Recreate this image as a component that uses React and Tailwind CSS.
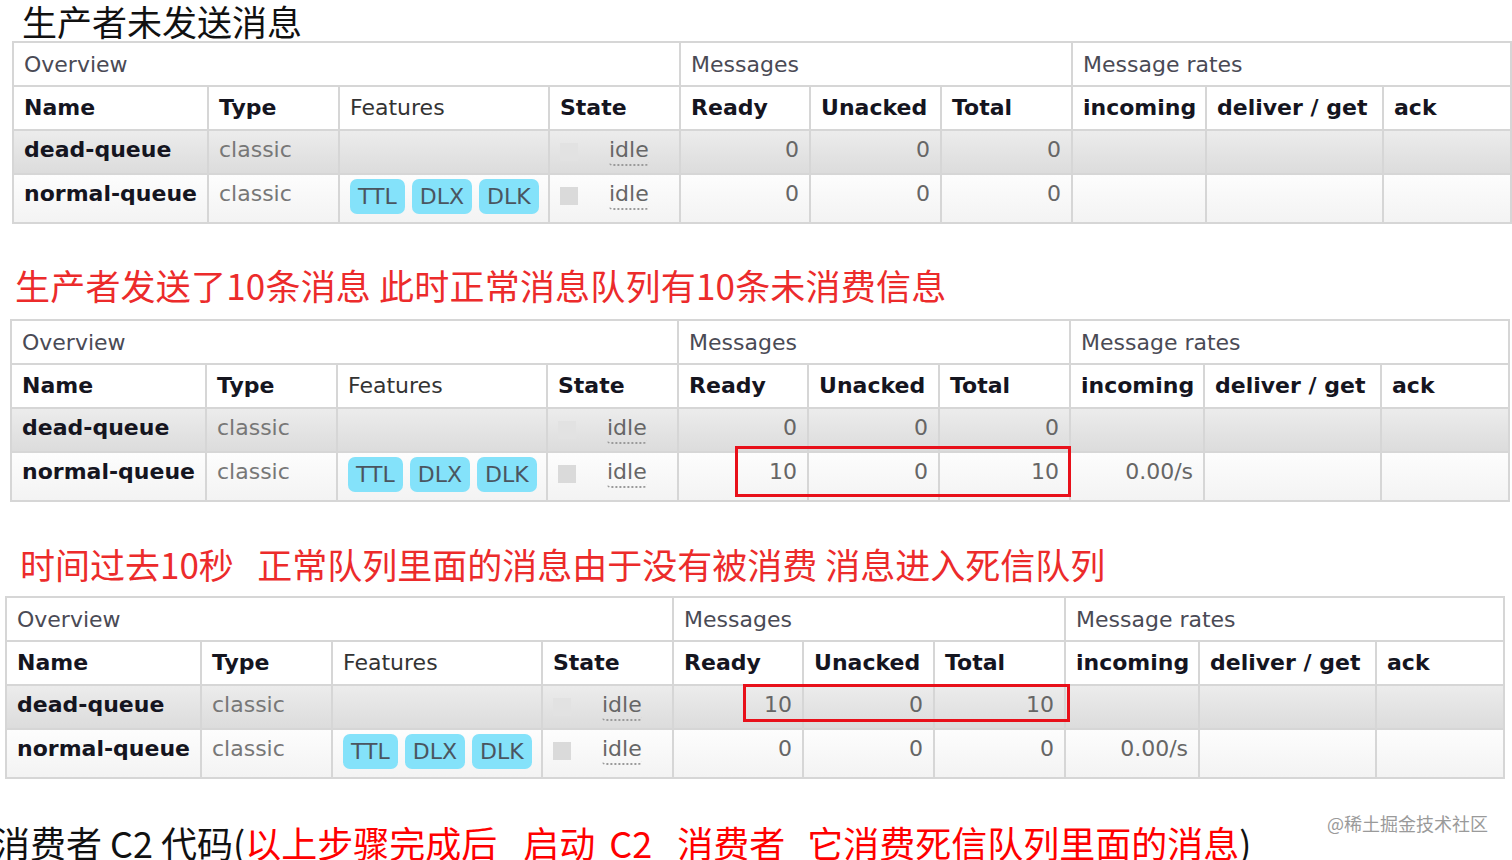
import React from 'react';

const cellBase = 'border-2 border-[#d6d6d6] px-[10px] overflow-hidden whitespace-nowrap';
const headBold = 'text-[22px] font-bold text-[#15151f]';

const Badge = ({ children }) => (
  <span className="inline-flex h-[35px] items-center rounded-[7px] bg-[#84e2fa] px-[8px] text-[22px] leading-[26px] text-[#4a5560]">
    {children}
  </span>
);

const Idle = ({ dead }) => (
  <div className="flex items-start">
    <span className={`mt-[6px] h-[18px] w-[18px] ${dead ? 'bg-[#e2e2e2]' : 'bg-[#dadada]'}`} />
    <span className="ml-[31px] rounded-b-[4px] border-b-2 border-dotted border-[#9a9a9a] pb-[1px] leading-[26px] text-[#666]">
      idle
    </span>
  </div>
);

const QueueTable = ({ rows, offset, box }) => (
  <div className={`relative h-[181px] ${offset}`}>
    <table className="w-[1498px] table-fixed border-collapse font-['DejaVu_Sans',Verdana,sans-serif]">
      <colgroup>
        <col className="w-[195px]" />
        <col className="w-[131px]" />
        <col className="w-[210px]" />
        <col className="w-[131px]" />
        <col className="w-[130px]" />
        <col className="w-[131px]" />
        <col className="w-[131px]" />
        <col className="w-[134px]" />
        <col className="w-[177px]" />
        <col className="w-[128px]" />
      </colgroup>
      <tbody>
        {/* group header */}
        <tr className="h-[44px] bg-white text-[22px] text-[#4a4a55]">
          <td colSpan={4} className={cellBase}>Overview</td>
          <td colSpan={3} className={cellBase}>Messages</td>
          <td colSpan={3} className={cellBase}>Message rates</td>
        </tr>
        <tr className="h-[44px] bg-white leading-[26px]">
          <td className={`${cellBase} ${headBold}`}>Name</td>
          <td className={`${cellBase} ${headBold}`}>Type</td>
          <td className={`${cellBase} text-[22px] text-[#333]`}>Features</td>
          <td className={`${cellBase} ${headBold}`}>State</td>
          <td className={`${cellBase} ${headBold}`}>Ready</td>
          <td className={`${cellBase} ${headBold}`}>Unacked</td>
          <td className={`${cellBase} ${headBold}`}>Total</td>
          <td className={`${cellBase} ${headBold}`}>incoming</td>
          <td className={`${cellBase} ${headBold}`}>deliver / get</td>
          <td className={`${cellBase} ${headBold}`}>ack</td>
        </tr>
        {rows.map((r) => {
          const bg = r.dead
            ? 'bg-gradient-to-b from-[#ececec] to-[#dcdcdc]'
            : 'bg-gradient-to-b from-[#fdfdfd] to-[#f3f3f3]';
          const td = `${cellBase} ${bg} align-top pt-[6px] leading-[26px]`;
          return (
            <tr key={r.name} className={r.dead ? 'h-[44px]' : 'h-[49px]'}>
              <td className={`${td} ${headBold}`}>{r.name}</td>
              <td className={`${td} text-[22px] text-[#777]`}>classic</td>
              <td className={`${td} !pt-[4px]`}>
                {!r.dead && (
                  <div className="flex gap-[7px]">
                    <Badge>TTL</Badge>
                    <Badge>DLX</Badge>
                    <Badge>DLK</Badge>
                  </div>
                )}
              </td>
              <td className={`${td} text-[22px]`}>
                <Idle dead={r.dead} />
              </td>
              <td className={`${td} text-right text-[22px] text-[#666]`}>{r.ready}</td>
              <td className={`${td} text-right text-[22px] text-[#666]`}>{r.unacked}</td>
              <td className={`${td} text-right text-[22px] text-[#666]`}>{r.total}</td>
              <td className={`${td} text-right text-[22px] text-[#666]`}>{r.incoming}</td>
              <td className={td} />
              <td className={td} />
            </tr>
          );
        })}
      </tbody>
    </table>
    {box}
  </div>
);

export default function App() {
  const cjk = "font-['Noto_Sans_CJK_SC','Noto_Sans',sans-serif]";
  return (
    <div className={`h-[860px] w-[1512px] overflow-hidden bg-white ${cjk}`}>
      <div className="ml-[22px] h-[41px] pt-[3px] text-[35px] leading-[36px] text-[#111]">
        生产者未发送消息
      </div>
      <QueueTable
        offset="ml-[12px]"
        rows={[
          { name: 'dead-queue', dead: true, ready: 0, unacked: 0, total: 0, incoming: '' },
          { name: 'normal-queue', dead: false, ready: 0, unacked: 0, total: 0, incoming: '' },
        ]}
      />

      <div className="ml-[15px] h-[97px] pt-[45px] text-[35px] leading-[35px] tracking-[0.2px] text-[#ec2b2b]">
        生产者发送了10条消息 此时正常消息队列有10条未消费信息
      </div>
      <QueueTable
        offset="ml-[10px]"
        rows={[
          { name: 'dead-queue', dead: true, ready: 0, unacked: 0, total: 0, incoming: '' },
          { name: 'normal-queue', dead: false, ready: 10, unacked: 0, total: 10, incoming: '0.00/s' },
        ]}
        box={<div className="absolute left-[725px] top-[127px] h-[51px] w-[336px] border-[3px] border-[#e8101a]" />}
      />

      <div className="ml-[20px] h-[96px] pt-[46px] text-[35px] leading-[35px] text-[#ec2b2b]">
        时间过去10秒&nbsp;&nbsp;&nbsp;正常队列里面的消息由于没有被消费 消息进入死信队列
      </div>
      <QueueTable
        offset="ml-[5px]"
        rows={[
          { name: 'dead-queue', dead: true, ready: 10, unacked: 0, total: 10, incoming: '' },
          { name: 'normal-queue', dead: false, ready: 0, unacked: 0, total: 0, incoming: '0.00/s' },
        ]}
        box={<div className="absolute left-[738px] top-[88px] h-[38px] w-[327px] border-[3px] border-[#e8101a]" />}
      />

      <div className="flex h-[83px] items-start">
        <div className="-ml-[6px] whitespace-nowrap pt-[47px] text-[36px] leading-[36px] text-[#111]">
          消费者 C2 代码(
          <span className="text-[#f00]">
            以上步骤完成后
            <span className="inline-block w-[26px]" />
            启动
            <span className="inline-block w-[14px]" />
            C2
            <span className="inline-block w-[25px]" />
            消费者
            <span className="inline-block w-[22px]" />
            它消费死信队列里面的消息
          </span>
          )
        </div>
        <div className="ml-auto mr-[24px] mt-[36px] text-[18px] leading-[20px] text-[#9a9a9a]">
          @稀土掘金技术社区
        </div>
      </div>
    </div>
  );
}
